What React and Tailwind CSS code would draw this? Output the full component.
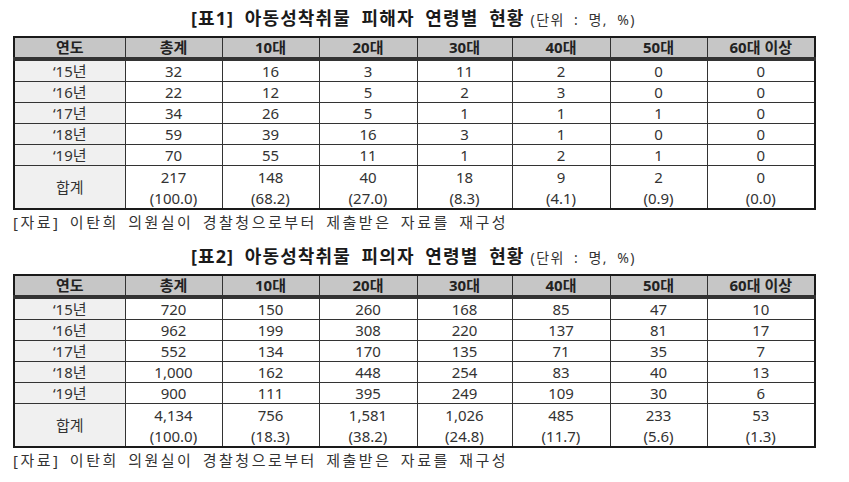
import React from 'react';

const HEADERS = ['연도', '총계', '10대', '20대', '30대', '40대', '50대', '60대 이상'];
const WIDTHS = ['w-[111px]', 'w-[97px]', 'w-[97px]', 'w-[98px]', 'w-[95px]', 'w-[98px]', 'w-[97px]', 'w-[108px]'];

const TABLES = [
  {
    title: '[표1] 아동성착취물 피해자 연령별 현황',
    rows: [
      ['‘15년', '32', '16', '3', '11', '2', '0', '0'],
      ['‘16년', '22', '12', '5', '2', '3', '0', '0'],
      ['‘17년', '34', '26', '5', '1', '1', '1', '0'],
      ['‘18년', '59', '39', '16', '3', '1', '0', '0'],
      ['‘19년', '70', '55', '11', '1', '2', '1', '0'],
    ],
    total: ['217', '148', '40', '18', '9', '2', '0'],
    share: ['(100.0)', '(68.2)', '(27.0)', '(8.3)', '(4.1)', '(0.9)', '(0.0)'],
  },
  {
    title: '[표2] 아동성착취물 피의자 연령별 현황',
    rows: [
      ['‘15년', '720', '150', '260', '168', '85', '47', '10'],
      ['‘16년', '962', '199', '308', '220', '137', '81', '17'],
      ['‘17년', '552', '134', '170', '135', '71', '35', '7'],
      ['‘18년', '1,000', '162', '448', '254', '83', '40', '13'],
      ['‘19년', '900', '111', '395', '249', '109', '30', '6'],
    ],
    total: ['4,134', '756', '1,581', '1,026', '485', '233', '53'],
    share: ['(100.0)', '(18.3)', '(38.2)', '(24.8)', '(11.7)', '(5.6)', '(1.3)'],
  },
];

const StatTable = ({ table }) => (
  <div className="flex flex-col">
    <div className="w-[801px] flex items-baseline justify-center h-[24px] leading-[24px] text-[#1a1a1a]">
      <span className="text-[18px] font-bold tracking-[1.1px] [word-spacing:5px]">{table.title}</span>
      <span className="text-[14px] text-[#333] ml-[6px] tracking-[1.5px] [word-spacing:4px]">(단위 : 명, %)</span>
    </div>
    <table className="mt-[6px] w-[801px] table-fixed border-collapse border-2 border-[#1a1a1a] text-[15px] text-[#333]">
      <thead>
        <tr>
          {HEADERS.map((h, i) => (
            <th
              key={h}
              className={`${WIDTHS[i]} h-[21px] p-0 leading-[19px] bg-[#c6c6c6] font-bold text-[#222] border border-[#333] border-b-[4px] border-b-double`}
            >
              {h}
            </th>
          ))}
        </tr>
      </thead>
      <tbody>
        {table.rows.map((row) => (
          <tr key={row[0]}>
            {row.map((cell, i) => (
              <td
                key={i}
                className={`h-[21px] p-0 leading-[20px] text-center border border-[#333] ${i === 0 ? 'bg-[#f0f0f0]' : 'bg-white'}`}
              >
                {cell}
              </td>
            ))}
          </tr>
        ))}
        <tr>
          <td className="h-[43px] p-0 text-center border border-[#333] bg-[#f0f0f0]">합계</td>
          {table.total.map((t, i) => (
            <td key={i} className="h-[43px] p-0 text-center border border-[#333] bg-white">
              <div className="leading-[22px]">{t}</div>
              <div className="leading-[20px]">{table.share[i]}</div>
            </td>
          ))}
        </tr>
      </tbody>
    </table>
    <div className="h-[22px] leading-[22px] mt-[1px] text-[15px] text-[#333] tracking-[2.5px] [word-spacing:3px]">
      [자료] 이탄희 의원실이 경찰청으로부터 제출받은 자료를 재구성
    </div>
  </div>
);

const App = () => {
  return (
    <div
      className="w-[849px] h-[482px] bg-white pl-[13px] pt-[6px] flex flex-col gap-[11px]"
      style={{ fontFamily: '"Noto Sans", "Noto Sans CJK KR", sans-serif' }}
    >
      {TABLES.map((t) => (
        <StatTable key={t.title} table={t} />
      ))}
    </div>
  );
};

export default App;
